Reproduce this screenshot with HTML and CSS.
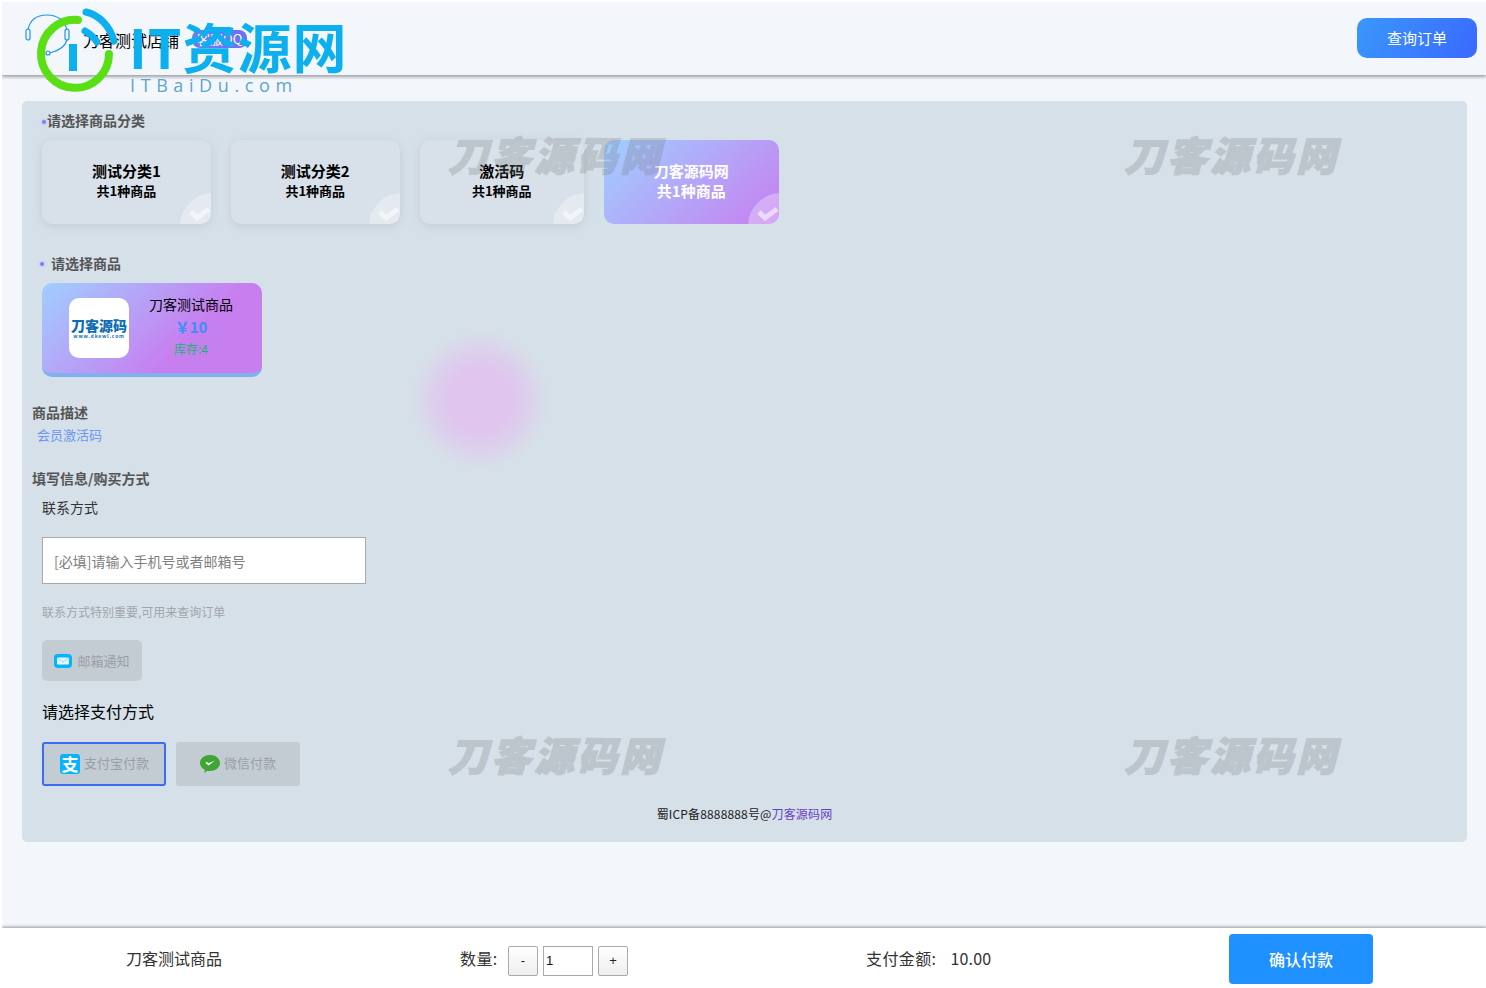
FILE: index.html
```html
<!DOCTYPE html>
<html lang="zh">
<head>
<meta charset="utf-8">
<title>刀客测试店铺</title>
<link rel="stylesheet" href="styles.css">
</head>
<body>
<div class="page">
  <header class="top">
    <svg class="headset" width="48" height="46" viewBox="0 0 48 46" fill="none" stroke="#1e96ee" stroke-width="1.200">
      <path d="M4 17C6 6 14 2 23 2C32 2 40 6 43 17"/>
      <rect x="2" y="16" width="4" height="11" rx="2"/>
      <rect x="41" y="16" width="4" height="11" rx="2"/>
      <path d="M43 27C41 34 34 38 26 40"/>
      <circle cx="24" cy="40" r="2"/>
    </svg>
    <span class="shop">刀客测试店铺</span>
    <span class="badge">客服QQ</span>
    <a class="query">查询订单</a>
  </header>

  <div class="logo">
    <svg class="logo-mark" width="96" height="96" viewBox="0 0 96 96" fill="none" stroke-linecap="round">
      <path d="M47 16A34 34 0 1 0 78 50" stroke="#5ade14" stroke-width="8"/>
      <path d="M55 8C68 11 79 22 83 37" stroke="#0cb0ee" stroke-width="7"/>
      <path d="M54 27C59 30 63 33 66 38" stroke="#0cb0ee" stroke-width="7"/>
      <rect x="38" y="40" width="8" height="27" fill="#0cb0ee"/>
    </svg>
    <div class="logo-words">
      <div class="logo-name">IT资源网</div>
      <div class="logo-url">ITBaiDu.com</div>
    </div>
  </div>

  <main class="main">
    <section class="card">
      <h3 class="sec-title sec-first"><i class="dot"></i>请选择商品分类</h3>
      <div class="tiles">
        <div class="tile"><b class="tile-a">测试分类1</b><b class="tile-b">共1种商品</b><span class="corner"><svg width="22" height="16" viewBox="0 0 22 16" fill="none" stroke="currentColor" stroke-width="5"><path d="M2 6L8 12L20 3"/></svg></span></div>
        <div class="tile"><b class="tile-a">测试分类2</b><b class="tile-b">共1种商品</b><span class="corner"><svg width="22" height="16" viewBox="0 0 22 16" fill="none" stroke="currentColor" stroke-width="5"><path d="M2 6L8 12L20 3"/></svg></span></div>
        <div class="tile"><b class="tile-a">激活码</b><b class="tile-b">共1种商品</b><span class="corner"><svg width="22" height="16" viewBox="0 0 22 16" fill="none" stroke="currentColor" stroke-width="5"><path d="M2 6L8 12L20 3"/></svg></span></div>
        <div class="tile tile-on"><b class="tile-a">刀客源码网</b><b class="tile-b">共1种商品</b><span class="corner"><svg width="22" height="16" viewBox="0 0 22 16" fill="none" stroke="currentColor" stroke-width="5"><path d="M2 6L8 12L20 3"/></svg></span></div>
      </div>

      <h3 class="sec-title sec-goods"><i class="dot"></i>请选择商品</h3>
      <div class="product">
        <div class="thumb"><span class="thumb-a">刀客源码</span><span class="thumb-b">www.dkewl.com</span></div>
        <div class="product-info">
          <div class="product-name">刀客测试商品</div>
          <div class="product-price">￥10</div>
          <div class="product-stock">库存:4</div>
        </div>
      </div>

      <h3 class="plain-title desc-title">商品描述</h3>
      <p class="desc">会员激活码</p>

      <h3 class="plain-title fill-title">填写信息/购买方式</h3>
      <div class="field-label">联系方式</div>
      <input class="contact" type="text" placeholder="[必填]请输入手机号或者邮箱号">
      <div class="hint">联系方式特别重要,可用来查询订单</div>
      <div class="notify">
        <svg width="18" height="14" viewBox="0 0 18 14"><rect width="18" height="14" rx="4" fill="#05b4fb"/><rect x="3" y="3.500" width="12" height="7" rx="1" fill="#e6f6ff"/><path d="M3.500 4L9 8L14.500 4" fill="none" stroke="#7fcdf5" stroke-width=".8"/></svg>
        <span>邮箱通知</span>
      </div>
      <div class="pay-title">请选择支付方式</div>
      <div class="pays">
        <div class="pay pay-on"><span class="ali">支</span><span>支付宝付款</span></div>
        <div class="pay">
          <svg width="20" height="18" viewBox="0 0 20 18"><path d="M10 0C15.500 0 20 3.500 20 8C20 12.500 15.500 16 10 16C9 16 8.200 15.900 7.300 15.700L4.500 18L4.700 14.700C1.900 13.300 0 10.900 0 8C0 3.500 4.500 0 10 0Z" fill="#3fa535"/><path d="M5.500 8L8.500 10.500L15 5.500L8.500 8.300L6.500 6.700Z" fill="#fff"/></svg>
          <span>微信付款</span>
        </div>
      </div>
      <div class="icp">蜀ICP备8888888号@<a class="icp-link">刀客源码网</a></div>

      <span class="blob"></span>
      <span class="mark mark-1">刀客源码网</span>
      <span class="mark mark-2">刀客源码网</span>
      <span class="mark mark-3">刀客源码网</span>
      <span class="mark mark-4">刀客源码网</span>
    </section>
  </main>

  <footer class="bar">
    <div class="bar-name">刀客测试商品</div>
    <div class="bar-qty">
      <span class="qty-label">数量:</span>
      <button class="qty-btn">-</button>
      <input class="qty-input" type="text" value="1">
      <button class="qty-btn">+</button>
    </div>
    <div class="bar-total"><span class="total-label">支付金额:</span><span class="total">10.00</span></div>
    <button class="buy">确认付款</button>
  </footer>
</div>
</body>
</html>
```
FILE: styles.css
```css
* { box-sizing: border-box; }
html, body { margin: 0; height: 100%; background: #fff; overflow: hidden; }
body { font-family: "Noto Sans CJK SC", "Liberation Sans", sans-serif; color: #000; }
.page { position: relative; height: 988px; margin-left: 2px; padding-top: 2px; display: flex; flex-direction: column; background: #fff; }

.top { position: relative; z-index: 2; height: 73px; flex: none; display: flex; align-items: center; background: #f3f6fb; box-shadow: 0 2px 3px rgba(0,0,0,.35); clip-path: inset(0 0 -6px 0); }
.headset { margin: -6px 0 0 22px; flex: none; }
.shop { margin: 2px 0 0 11px; font-size: 16px; line-height: 20px; white-space: nowrap; }
.badge { margin: 0 0 0 13px; padding: 0 5px; height: 18px; line-height: 17px; font-size: 13px; color: #fff; border-radius: 8px; white-space: nowrap; background: linear-gradient(90deg,#6f7df0,#6a70f5); }
.query { margin: -2px 9px 0 auto; width: 120px; height: 40px; line-height: 39px; text-align: center; font-size: 15px; color: #fff; border-radius: 10px; background: linear-gradient(120deg,#3a98fb,#3a68ff); }

.logo { position: absolute; z-index: 3; left: 32px; top: 4px; display: flex; pointer-events: none; }
.logo-mark { flex: none; margin-left: -3px; }
.logo-words { margin: 14px 0 0 3px; }
.logo-name { font-size: 54px; line-height: 58px; height: 58px; font-weight: 700; color: #0cb0ee; white-space: nowrap; letter-spacing: 1px; margin-left: -1px; margin-top: -1px; }
.logo-url { font-size: 18px; line-height: 20px; letter-spacing: 5.600px; color: #5ea6cc; font-family: "Open Sans", sans-serif; }

.main { flex: 1; padding: 26px 19px 0 20px; background: #f3f6fb; }
.card { position: relative; height: 741px; padding: 9px 20px 18px; border-radius: 5px; background: #d6e0e9; }

.sec-title { display: flex; align-items: center; margin: 0; height: 20px; font-size: 14px; line-height: 20px; font-weight: 700; color: #555; }
.dot { width: 4px; height: 4px; flex: none; border-radius: 50%; background: #7b80f5; box-shadow: 0 0 2px 1px #c5c8fb; }
.sec-first .dot { margin: 3px 1px 0 0; }
.sec-goods { margin: 29px 0 0 -2px; }
.sec-goods .dot { margin: 1px 7px 0 0; }

.tiles { display: flex; gap: 20px; margin-top: 10px; }
.tile { position: relative; height: 84px; min-width: 164px; padding: 0 50px 4px; display: flex; flex-direction: column; align-items: center; justify-content: center; overflow: hidden; border-radius: 10px; background: #d8e1e9; box-shadow: 0 2px 8px rgba(150,165,180,.35); }
.tile-a { font-size: 15px; line-height: 21px; white-space: nowrap; }
.tile-b { font-size: 13px; line-height: 20px; white-space: nowrap; }
.tile-on { color: #fff; background: linear-gradient(135deg,#a0cfff 0%,#c77ff0 100%); box-shadow: none; }
.tile-on .tile-b { font-size: 15px; }
.corner { position: absolute; right: -2px; bottom: -2px; width: 33px; height: 33px; border-top-left-radius: 33px; background: rgba(255,255,255,.3); color: rgba(255,255,255,.55); display: flex; align-items: flex-end; justify-content: flex-end; padding: 0 2px 4px 0; }

.product { width: 220px; height: 94px; margin-top: 10px; padding: 15px 0 0 27px; display: flex; border-bottom: 4px solid #7fb0f0; border-radius: 10px; background: linear-gradient(135deg,#a0cfff 0%,#c77ff0 65%); }
.thumb { width: 60px; height: 60px; flex: none; border-radius: 10px; background: #fff; display: flex; flex-direction: column; align-items: center; justify-content: center; color: #0d6db5; }
.thumb-a { font-size: 14px; line-height: 16px; font-weight: 900; white-space: nowrap; }
.thumb-b { font-size: 5px; line-height: 6px; font-weight: 700; letter-spacing: .8px; white-space: nowrap; }
.product-info { width: 84px; margin: -4px 0 0 20px; text-align: center; }
.product-name { font-size: 14px; line-height: 20px; white-space: nowrap; }
.product-price { margin-top: 3px; font-size: 15px; line-height: 20px; font-weight: 700; color: #3b8ff5; }
.product-stock { margin-top: 3px; font-size: 12px; line-height: 18px; color: #10b86f; }

.plain-title { margin: 0 0 0 -10px; height: 20px; line-height: 20px; font-size: 14px; font-weight: 700; color: #555; }
.desc-title { margin-top: 25px; }
.desc { margin: 3px 0 0 -5px; height: 20px; line-height: 20px; font-size: 13px; color: #6b97ee; }
.fill-title { margin-top: 23px; }
.field-label { margin-top: 9px; height: 20px; line-height: 20px; font-size: 14px; color: #333; }
.contact { display: block; width: 324px; height: 47px; margin-top: 20px; padding: 0 11px; font: 14px "Noto Sans CJK SC", sans-serif; background: #fff; border: 1px solid #aaa; outline: 0; }
.contact::placeholder { color: #808080; opacity: 1; }
.hint { margin-top: 18px; height: 20px; line-height: 20px; font-size: 12px; color: #a0a5aa; }
.notify { width: 100px; height: 41px; margin-top: 18px; display: flex; align-items: center; justify-content: center; gap: 5px; font-size: 13px; color: #9aa0a6; border-radius: 5px; background: #c3cbd3; }
.pay-title { margin-top: 20px; height: 20px; line-height: 20px; font-size: 16px; }
.pays { display: flex; gap: 10px; margin-top: 21px; }
.pay { width: 124px; height: 44px; display: flex; align-items: center; justify-content: center; gap: 4px; font-size: 13px; line-height: 16px; color: #9aa0a6; border-radius: 3px; background: #c3cbd3; }
.pay span:last-child { margin-bottom: 3px; }
.pay-on { border: 2px solid #3a6cf5; }
.ali { width: 20px; height: 20px; margin-left: 1px; border-radius: 3px; background: #06b4fd; color: #fff; font-size: 17px; line-height: 19px; text-align: center; font-weight: 700; }
.icp { margin-top: 18px; height: 20px; line-height: 20px; text-align: center; font-size: 12px; letter-spacing: .15px; color: #222; }
.icp-link { color: #6a3fc0; }

.blob { position: absolute; left: 388px; top: 229px; width: 140px; height: 140px; border-radius: 50%; background: radial-gradient(closest-side,#e0c6ee 0%,#e0c6ee 45%,#dccfec 68%,#d9d9ea 85%,rgba(214,224,233,0) 100%); pointer-events: none; }
.mark { position: absolute; font-size: 40px; line-height: 46px; font-weight: 900; font-style: italic; letter-spacing: 3px; color: #787d82; -webkit-text-stroke: 1.200px #787d82; opacity: .27; white-space: nowrap; pointer-events: none; }
.mark-1 { left: 426px; top: 30px; }
.mark-2 { left: 1102px; top: 30px; }
.mark-3 { left: 426px; top: 630px; }
.mark-4 { left: 1102px; top: 630px; }

.bar { position: relative; z-index: 2; height: 60px; flex: none; display: flex; align-items: center; padding-left: 124px; font-size: 16px; color: #333; background: #fff; box-shadow: 0 -1px 3px rgba(0,0,0,.4); clip-path: inset(-6px 0 0 0); }
.bar-name { width: 334px; }
.bar-qty { width: 406px; display: flex; align-items: center; }
.qty-label { width: 48px; letter-spacing: .4px; }
.qty-btn { width: 30px; height: 30px; margin-top: 5px; padding: 0; font: 13px "Liberation Sans", sans-serif; color: #222; border: 1px solid #aaa; border-radius: 2px; background: linear-gradient(#fff,#eee); }
.qty-input { width: 50px; height: 30px; margin: 5px 5px 0; padding: 0 2px; font: 13px "Liberation Sans", sans-serif; color: #111; border: 1px solid #aaa; outline: 0; background: #fff; }
.bar-total { width: 363px; display: flex; }
.total-label { letter-spacing: .4px; }
.total { margin-left: 14px; letter-spacing: .2px; }
.buy { width: 144px; height: 50px; margin-top: 2px; font: 500 16px "Noto Sans CJK SC", sans-serif; color: #fff; border: 0; border-radius: 4px; background: #1e90ff; }
```
